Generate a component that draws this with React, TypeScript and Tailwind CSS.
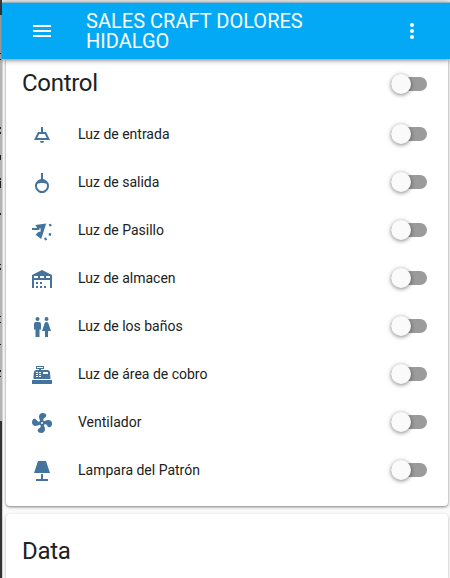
import type { ReactNode } from "react";

const FONT = "font-['Roboto','Noto_Sans',sans-serif]";

function Icon({ d, children }: { d?: string; children?: ReactNode }) {
  return (
    <svg viewBox="0 0 24 24" className="size-6 shrink-0 fill-current">
      {d ? <path fillRule="evenodd" d={d} /> : children}
    </svg>
  );
}

const icons = {
  menu: "M3,6H21V8H3V6M3,11H21V13H3V11M3,16H21V18H3V16Z",
  dots: "M12,16A2,2 0 0,1 14,18A2,2 0 0,1 12,20A2,2 0 0,1 10,18A2,2 0 0,1 12,16M12,10A2,2 0 0,1 14,12A2,2 0 0,1 12,14A2,2 0 0,1 10,12A2,2 0 0,1 12,10M12,4A2,2 0 0,1 14,6A2,2 0 0,1 12,8A2,2 0 0,1 10,6A2,2 0 0,1 12,4Z",
  ceiling: "M8,9H11V4H13V9H16L20,17H4L8,9M9.24,11L7.24,15H16.76L14.76,11H9.24M10,18H14A2,2 0 0,1 10,18Z",
  globe: "M11,2H13V8.07A7,7 0 1,1 11,8.07V2M7.42,13A5,5 0 1,0 16.58,13C15.5,12 14,12 12,12C10,12 8.5,12 7.42,13Z",
  spot: "M5.3,6L16.2,4.4L11.2,20L5.6,15.8L8.6,12.8H10.6V9.2H9.4V11H2V9H7.2L5.3,6M18.8,5.3L21,4.7L21.7,6.9L19.5,7.5L18.8,5.3M19.1,13.9L21.4,14.5L20.8,16.9L18.5,16.3L19.1,13.9M14,19.1L16,18.4L17.2,20.7L15.1,21.5L14,19.1Z",
  warehouse: "M6,19H8V21H6V19M12,3L2,8V21H4V13H20V21H22V8L12,3M8,11H4V9H8V11M14,11H10V9H14V11M20,11H16V9H20V11M6,15H8V17H6V15M10,15H12V17H10V15M10,19H12V21H10V19M14,19H16V21H14V19Z",
  people: "M7.5,2A2,2 0 0,1 9.5,4A2,2 0 0,1 7.5,6A2,2 0 0,1 5.5,4A2,2 0 0,1 7.5,2M6,7H9A2,2 0 0,1 11,9V14.5H9.5V22H5.5V14.5H4V9A2,2 0 0,1 6,7M16.5,2A2,2 0 0,1 18.5,4A2,2 0 0,1 16.5,6A2,2 0 0,1 14.5,4A2,2 0 0,1 16.5,2M15,22V16H12L14.59,8.41C14.84,7.59 15.6,7 16.5,7C17.4,7 18.16,7.59 18.41,8.41L21,16H18V22H15Z",
  register: "M2,17H22V21H2V17M6.25,7H9V6H6V3H14V6H11V7H17.8C18.8,7 19.8,8 20,9L20.5,16H3.5C3.5,16 3.5,10 4,9C4.2,8 5.25,7 6.25,7M13,9V11H18V9H13M6,9V10H8V9H6M9,9V10H11V9H9M6,11V12H8V11H6M9,11V12H11V11H9M6,13V14H8V13H6M9,13V14H11V13H9M7,4V5H13V4H7Z",
  fan: "M12,11A1,1 0 0,0 11,12A1,1 0 0,0 12,13A1,1 0 0,0 13,12A1,1 0 0,0 12,11M12.5,2C17,2 17.11,5.57 14.75,6.75C13.76,7.24 13.32,8.29 13.13,9.22C13.61,9.42 14.03,9.73 14.35,10.13C18.05,8.13 22.03,8.92 22.03,12.5C22.03,17 18.46,17.1 17.28,14.73C16.78,13.74 15.72,13.3 14.79,13.11C14.59,13.59 14.28,14 13.88,14.34C15.87,18.03 15.08,22 11.5,22C7,22 6.91,18.42 9.27,17.24C10.25,16.75 10.69,15.71 10.89,14.79C10.4,14.59 9.97,14.27 9.65,13.87C5.96,15.85 2,15.07 2,11.5C2,7 5.56,6.89 6.74,9.26C7.24,10.25 8.29,10.68 9.22,10.87C9.41,10.39 9.73,9.97 10.14,9.65C8.15,5.96 8.94,2 12.5,2Z",
  lamp: "M8,2H16L20,14H4L8,2M11,15H13V20H18V22H6V20H11V15Z",
};

const rows = [
  { icon: icons.ceiling, label: "Luz de entrada" },
  { icon: icons.globe, label: "Luz de salida" },
  { icon: icons.spot, label: "Luz de Pasillo" },
  { icon: icons.warehouse, label: "Luz de almacen" },
  { icon: icons.people, label: "Luz de los baños" },
  { icon: icons.register, label: "Luz de área de cobro" },
  { icon: icons.fan, label: "Ventilador" },
  { icon: icons.lamp, label: "Lampara del Patrón" },
];

function Toggle() {
  return (
    <button
      type="button"
      role="switch"
      aria-checked="false"
      className="flex h-3.5 w-9 shrink-0 items-center rounded-full bg-[#9b9b9b]"
    >
      <span className="size-5 shrink-0 rounded-full bg-[#fafafa] shadow-[0_1px_4px_rgba(0,0,0,0.5)]" />
    </button>
  );
}

// Slivers of the window behind, visible along the left edge.
const marks = [
  "top-[53px] h-px", "top-[59px] h-px", "top-[127px] h-[2px]", "top-[132px] h-[2px]",
  "top-[155px] h-[5px]", "top-[178px] h-[2px]", "top-[181px] h-[7px]", "top-[213px] h-[2px]",
  "top-[264px] h-px", "top-[268px] h-[2px]", "top-[316px] h-px", "top-[322px] h-px",
  "top-[344px] h-px", "top-[370px] h-[2px]", "top-[376px] h-px",
];

export default function App() {
  return (
    <div className={`flex h-[578px] w-[450px] overflow-hidden bg-[#fafafa] text-[#212121] ${FONT}`}>
      <div className="relative flex w-[2px] shrink-0 flex-col">
        <div className="h-[15px] bg-[#3e3e40]" />
        <div className="h-[406px] bg-[#b4b4b4]" />
        <div className="flex-1 bg-[#343036]" />
        {marks.map((m) => (
          <i key={m} className={`absolute left-0 w-px bg-[#222] ${m}`} />
        ))}
      </div>
      <div className="flex min-w-0 flex-1 flex-col border-t-2 border-[#f2f0ef]">
        <header className="z-10 flex h-[57px] shrink-0 items-center border-t border-[#8eb4c8] bg-[#03a9f4] pr-[26px] pl-7 text-white shadow-[0_1px_5px_rgba(0,0,0,0.55)]">
          <Icon d={icons.menu} />
          <h1 className="ml-8 flex-1 pr-16 text-xl leading-5 font-normal tracking-[0.02px]">SALES CRAFT DOLORES HIDALGO</h1>
          <Icon d={icons.dots} />
        </header>
        <main className="flex flex-1 flex-col gap-2 border-l border-[#d2d2d2] pr-[2px] pl-[3px]">
          <section className="h-[447px] shrink-0 rounded-b-sm bg-white pr-[21px] pl-4 shadow-[0_1px_3px_rgba(0,0,0,0.5)]">
            <div className="flex h-[50px] items-center justify-between">
              <h2 className="pb-[2px] text-2xl leading-8 tracking-[-0.012em]">Control</h2>
              <Toggle />
            </div>
            <ul className="flex flex-col gap-2 pt-[5px]">
              {rows.map((r) => (
                <li key={r.label} className="flex h-10 items-center pl-2">
                  <span className="pt-[2px] text-[#44739e]">
                    <Icon d={r.icon} />
                  </span>
                  <span className="ml-6 flex-1 text-sm leading-5">{r.label}</span>
                  <Toggle />
                </li>
              ))}
            </ul>
          </section>
          <section className="flex-1 rounded-t-sm bg-white px-4 pt-[21px] shadow-[0_1px_3px_rgba(0,0,0,0.3)]">
            <h2 className="text-2xl leading-8 tracking-[-0.012em]">Data</h2>
          </section>
        </main>
      </div>
    </div>
  );
}
